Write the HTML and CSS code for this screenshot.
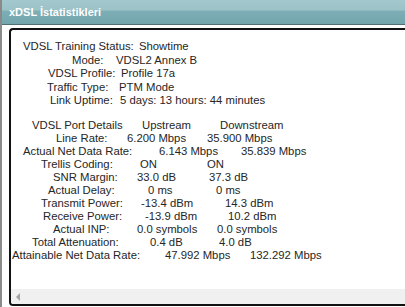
FILE: index.html
```html
<!DOCTYPE html>
<html lang="tr">
<head>
    <meta charset="UTF-8">
    <meta name="viewport" content="width=device-width, initial-scale=1.0">
    <title>xDSL İstatistikleri</title>
    <link rel="stylesheet" href="styles.css">
</head>
<body>
    <div class="page">
        <div class="panel-title">xDSL İstatistikleri</div>
        <div class="stats-box">
            <div class="stats-content">
                <div class="block block-status">
                    <div class="line r-status"><span class="k">VDSL Training Status:</span><span class="v">Showtime</span></div>
                    <div class="line r-mode"><span class="k">Mode:</span><span class="v">VDSL2 Annex B</span></div>
                    <div class="line r-profile"><span class="k">VDSL Profile:</span><span class="v">Profile 17a</span></div>
                    <div class="line r-traffic"><span class="k">Traffic Type:</span><span class="v">PTM Mode</span></div>
                    <div class="line r-uptime"><span class="k">Link Uptime:</span><span class="v">5 days: 13 hours: 44 minutes</span></div>
                </div>
                <div class="block block-port">
                    <div class="line r-head"><span class="k">VDSL Port Details</span><span class="v">Upstream</span><span class="v2">Downstream</span></div>
                    <div class="line r-rate"><span class="k">Line Rate:</span><span class="v">6.200 Mbps</span><span class="v2">35.900 Mbps</span></div>
                    <div class="line r-net"><span class="k">Actual Net Data Rate:</span><span class="v">6.143 Mbps</span><span class="v2">35.839 Mbps</span></div>
                    <div class="line r-trellis"><span class="k">Trellis Coding:</span><span class="v">ON</span><span class="v2">ON</span></div>
                    <div class="line r-snr"><span class="k">SNR Margin:</span><span class="v">33.0 dB</span><span class="v2">37.3 dB</span></div>
                    <div class="line r-delay"><span class="k">Actual Delay:</span><span class="v">0 ms</span><span class="v2">0 ms</span></div>
                    <div class="line r-tx"><span class="k">Transmit Power:</span><span class="v">-13.4 dBm</span><span class="v2">14.3 dBm</span></div>
                    <div class="line r-rx"><span class="k">Receive Power:</span><span class="v">-13.9 dBm</span><span class="v2">10.2 dBm</span></div>
                    <div class="line r-inp"><span class="k">Actual INP:</span><span class="v">0.0 symbols</span><span class="v2">0.0 symbols</span></div>
                    <div class="line r-atten"><span class="k">Total Attenuation:</span><span class="v">0.4 dB</span><span class="v2">4.0 dB</span></div>
                    <div class="line r-attain"><span class="k">Attainable Net Data Rate:</span><span class="v">47.992 Mbps</span><span class="v2">132.292 Mbps</span></div>
                </div>
            </div>
            <div class="hscroll"><span class="arrow-left"></span></div>
        </div>
    </div>
</body>
</html>
```

FILE: styles.css
```css
html, body {
    margin: 0;
    padding: 0;
    background-color: #fff;
    overflow: hidden;
}
.page {
    height: 307px;
    border-left: 2px solid #8a8a8a;
    font-family: "Liberation Sans", Arial, sans-serif;
}
.panel-title {
    height: 24px;
    line-height: 24px;
    padding-left: 7px;
    color: #fff;
    font-size: 11px;
    font-weight: bold;
    background: linear-gradient(to bottom, #a3c8cd 0%, #9cc3c8 40%, #7eaeb5 48%, #72a5ac 100%);
    border-bottom: 1px solid #4f6f74;
}
.stats-box {
    margin-top: 3px;
    margin-left: 7px;
    height: 274px;
    border: 2px solid #111;
    border-right: none;
    border-radius: 4px 0 0 4px;
    display: flex;
    flex-direction: column;
    overflow: hidden;
}
.stats-content {
    flex: 1;
    padding-top: 10px;
    font-size: 11.3px;
    color: #262626;
    white-space: nowrap;
    overflow: hidden;
}
.line {
    display: flex;
}
.line span {
    flex: none;
}
.block-status .line {
    line-height: 13.5px;
}
.block-port {
    margin-top: 11px;
}
.block-port .line {
    line-height: 13px;
}

/* column starts, per row */
.r-status { padding-left: 12px; }
.r-status .k { width: 116px; }
.r-mode { padding-left: 61px; }
.r-mode .k { width: 44px; }
.r-profile { padding-left: 37px; }
.r-profile .k { width: 73px; }
.r-traffic { padding-left: 36px; }
.r-traffic .k { width: 72px; }
.r-uptime { padding-left: 39px; }
.r-uptime .k { width: 70px; }

.r-head { padding-left: 21px; }
.r-head .k { width: 110px; }
.r-head .v { width: 78px; }
.r-rate { padding-left: 45px; }
.r-rate .k { width: 71px; }
.r-rate .v { width: 80px; }
.r-net { padding-left: 12px; }
.r-net .k { width: 136px; }
.r-net .v { width: 82px; }
.r-trellis { padding-left: 30px; }
.r-trellis .k { width: 99px; }
.r-trellis .v { width: 67px; }
.r-snr { padding-left: 42px; }
.r-snr .k { width: 84px; }
.r-snr .v { width: 72px; }
.r-delay { padding-left: 37px; }
.r-delay .k { width: 100px; }
.r-delay .v { width: 68px; }
.r-tx { padding-left: 30px; }
.r-tx .k { width: 100px; }
.r-tx .v { width: 84px; }
.r-rx { padding-left: 32px; }
.r-rx .k { width: 102px; }
.r-rx .v { width: 83px; }
.r-inp { padding-left: 42px; }
.r-inp .k { width: 84px; }
.r-inp .v { width: 80px; }
.r-atten { padding-left: 21px; }
.r-atten .k { width: 118px; }
.r-atten .v { width: 69px; }
.r-attain { padding-left: 1px; }
.r-attain .k { width: 153px; }
.r-attain .v { width: 85px; }

.hscroll {
    height: 15px;
    background-color: #f0f0f0;
    display: flex;
    align-items: center;
    padding-left: 5px;
}
.arrow-left {
    width: 0;
    height: 0;
    border-top: 4px solid transparent;
    border-bottom: 4px solid transparent;
    border-right: 4px solid #a3a3a3;
}
```
